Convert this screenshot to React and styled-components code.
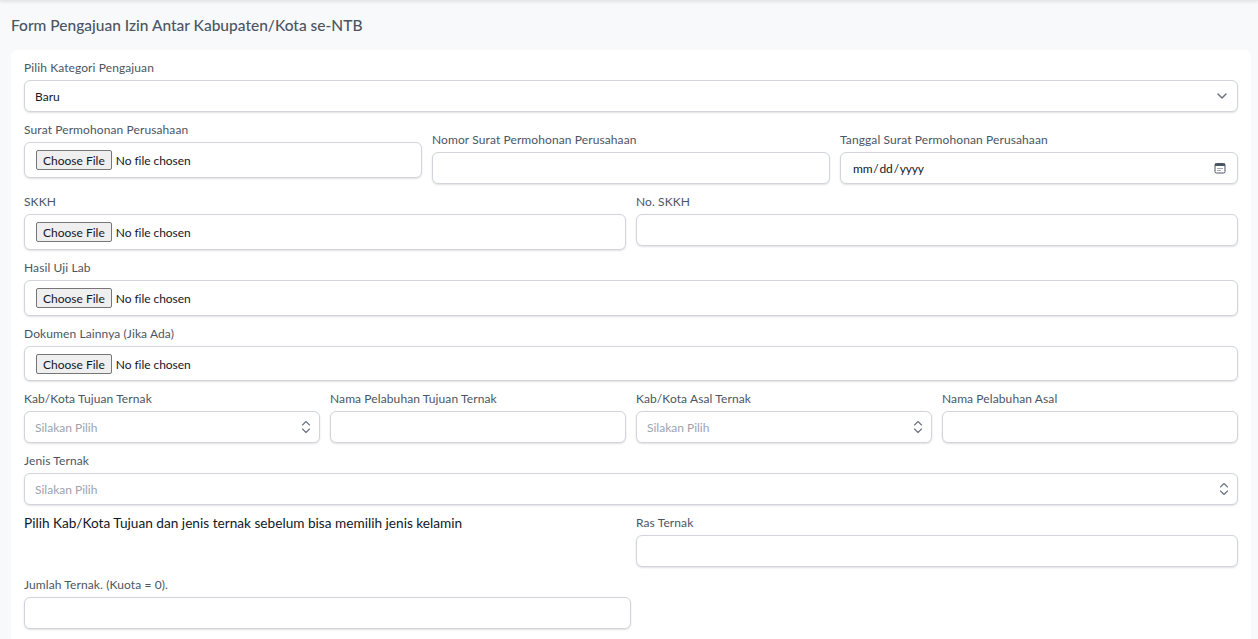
import styled, { createGlobalStyle } from "styled-components";

const GlobalStyle = createGlobalStyle`
  html, body {
    margin: 0;
    height: 100%;
    overflow: hidden;
    background: #f8f9fb;
  }
  * {
    box-sizing: border-box;
  }
  body {
    font-family: Lato, "Open Sans", sans-serif;
    -webkit-font-smoothing: antialiased;
  }
`;

const TopBar = styled.div`
  height: 1px;
  background: #e5e7eb;
  box-shadow: 0 1px 3px rgba(0, 0, 0, 0.18);
`;

const Page = styled.main`
  padding: 15px 7px 0 11px;
`;

const Title = styled.h1`
  margin: 0 0 16px;
  font-size: 15.5px;
  line-height: 18px;
  font-weight: 500;
  color: #4b5563;
`;

const Card = styled.section`
  display: flex;
  flex-direction: column;
  gap: 9px;
  padding: 9px 13px 60px;
  background: #fff;
  border-radius: 6px;
`;

const Row = styled.div`
  display: grid;
  grid-template-columns: repeat(${(p) => p.$cols || 1}, minmax(0, 1fr));
  column-gap: 10px;
  align-items: start;
  width: ${(p) => p.$width || "100%"};
`;

const Field = styled.div`
  display: flex;
  flex-direction: column;
  margin-top: ${(p) => p.$offset || 0}px;
`;

const Label = styled.label`
  font-size: 12px;
  line-height: 18px;
  letter-spacing: 0.1px;
  margin-bottom: 3px;
  color: #4b5563;
`;

const Note = styled.p`
  margin: 0;
  font-size: 13.65px;
  line-height: 18px;
  color: #111827;
`;

const controlStyles = `
  width: 100%;
  height: 32px;
  padding: 0 10px;
  background: #fff;
  border: 1px solid #d1d5db;
  border-radius: 6px;
  box-shadow: 0 1px 2px rgba(0, 0, 0, 0.12);
  font-family: inherit;
  font-size: 12px;
  color: #111827;
  outline: none;
`;

const Input = styled.input`
  ${controlStyles}
  &::placeholder {
    color: #9ca3af;
    opacity: 1;
  }
`;

const DateInput = styled.input`
  ${controlStyles}
  padding-left: 11px;
  &::-webkit-datetime-edit {
    letter-spacing: -0.2px;
  }
  &::-webkit-datetime-edit-fields-wrapper {
    padding: 0;
  }
  &::-webkit-datetime-edit-text {
    padding: 0;
  }
  &::-webkit-calendar-picker-indicator {
    opacity: 0;
  }
`;

const FileInput = styled.input`
  ${controlStyles}
  height: ${(p) => p.$height || 36}px;
  padding: 7px 11px;
  letter-spacing: -0.05px;
  &::file-selector-button {
    height: 20px;
    margin-right: 4px;
    padding: 0 6px;
    background: #efefef;
    border: 1px solid #767676;
    border-radius: 2px;
    font-family: inherit;
    font-size: 12px;
    color: #111827;
  }
`;

const SelectWrap = styled.div`
  position: relative;
`;

const Select = styled.select`
  ${controlStyles}
  appearance: none;
  display: block;
`;

const SelectIcon = styled.svg`
  position: absolute;
  top: 50%;
  right: ${(p) => p.$right || 8}px;
  width: ${(p) => p.$size || 16}px;
  height: ${(p) => p.$size || 16}px;
  transform: translateY(-50%);
  pointer-events: none;
  color: ${(p) => p.$color || "#6b7280"};
`;

const Dropdown = () => (
  <SelectWrap>
    <Select defaultValue="Baru">
      <option>Baru</option>
    </Select>
    <SelectIcon $size={20} $right={6} viewBox="0 0 20 20" fill="none" stroke="currentColor" strokeWidth="1.5" strokeLinecap="round" strokeLinejoin="round">
      <path d="M6 8l4 4 4-4" />
    </SelectIcon>
  </SelectWrap>
);

const Combobox = () => (
  <SelectWrap>
    <Input placeholder="Silakan Pilih" readOnly />
    <SelectIcon $right={6} viewBox="0 0 16 16" fill="none" stroke="currentColor" strokeWidth="1.1" strokeLinecap="round" strokeLinejoin="round">
      <path d="M4.5 6 8 2.5 11.5 6" />
      <path d="M4.5 10 8 13.5 11.5 10" />
    </SelectIcon>
  </SelectWrap>
);

const DatePicker = () => (
  <SelectWrap>
    <DateInput type="date" />
    <SelectIcon $size={12} $right={12} $color="#4b5563" viewBox="0 0 12 12">
      <rect x="1" y="1.5" width="10" height="9.5" rx="1.5" fill="none" stroke="currentColor" strokeWidth="1" />
      <rect x="1" y="1.5" width="10" height="2.5" fill="currentColor" />
      <path d="M3.5 6h1v1h-1zM5.5 6h1v1h-1zM7.5 6h1v1h-1zM3.5 8h1v1h-1zM5.5 8h1v1h-1z" fill="currentColor" />
    </SelectIcon>
  </SelectWrap>
);

const App = () => {
  return (
    <>
      <GlobalStyle />
      <TopBar />
      <Page>
        <Title>Form Pengajuan Izin Antar Kabupaten/Kota se-NTB</Title>
        <Card>
          <Row>
            <Field>
              <Label>Pilih Kategori Pengajuan</Label>
              <Dropdown />
            </Field>
          </Row>

          <Row $cols={3}>
            <Field>
              <Label>Surat Permohonan Perusahaan</Label>
              <FileInput type="file" />
            </Field>
            <Field $offset={10}>
              <Label>Nomor Surat Permohonan Perusahaan</Label>
              <Input type="text" />
            </Field>
            <Field $offset={10}>
              <Label>Tanggal Surat Permohonan Perusahaan</Label>
              <DatePicker />
            </Field>
          </Row>

          <Row $cols={2}>
            <Field>
              <Label>SKKH</Label>
              <FileInput type="file" />
            </Field>
            <Field>
              <Label>No. SKKH</Label>
              <Input type="text" />
            </Field>
          </Row>

          <Row>
            <Field>
              <Label>Hasil Uji Lab</Label>
              <FileInput type="file" />
            </Field>
          </Row>

          <Row>
            <Field>
              <Label>Dokumen Lainnya (Jika Ada)</Label>
              <FileInput type="file" $height={35} />
            </Field>
          </Row>

          <Row $cols={4}>
            <Field>
              <Label>Kab/Kota Tujuan Ternak</Label>
              <Combobox />
            </Field>
            <Field>
              <Label>Nama Pelabuhan Tujuan Ternak</Label>
              <Input type="text" />
            </Field>
            <Field>
              <Label>Kab/Kota Asal Ternak</Label>
              <Combobox />
            </Field>
            <Field>
              <Label>Nama Pelabuhan Asal</Label>
              <Input type="text" />
            </Field>
          </Row>

          <Row>
            <Field>
              <Label>Jenis Ternak</Label>
              <Combobox />
            </Field>
          </Row>

          <Row $cols={2}>
            <Note>Pilih Kab/Kota Tujuan dan jenis ternak sebelum bisa memilih jenis kelamin</Note>
            <Field>
              <Label>Ras Ternak</Label>
              <Input type="text" />
            </Field>
          </Row>

          <Row $width="50%">
            <Field>
              <Label>Jumlah Ternak. (Kuota = 0).</Label>
              <Input type="text" />
            </Field>
          </Row>
        </Card>
      </Page>
    </>
  );
};

export default App;
